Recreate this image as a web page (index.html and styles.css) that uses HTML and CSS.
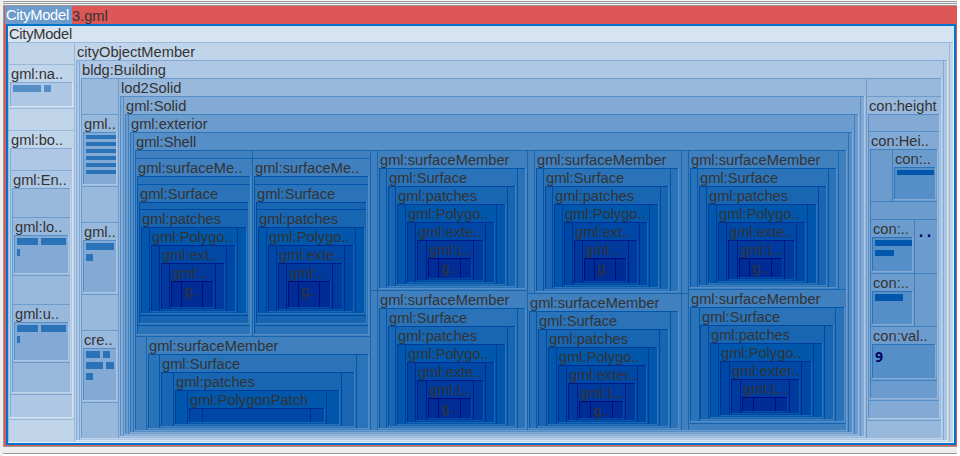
FILE: index.html
```
<!DOCTYPE html>
<html lang="en">
<head>
<meta charset="utf-8">
<title>3.gml</title>
<link rel="stylesheet" href="styles.css">
</head>
<body>
<div class="window">
  <div class="rules"></div>
  <main class="panel">
    <header class="title"><span class="tab">CityModel</span><span class="file">3.gml</span></header>
    <section class="frame" id="map"></section>
  </main>
  <footer class="foot"></footer>
</div>
<script src="treemap.js"></script>
</body>
</html>
```
FILE: styles.css
```
* { box-sizing: border-box; }
body {
  margin: 0;
  width: 960px;
  height: 456px;
  overflow: hidden;
  background: #fff;
  font: 14.67px/18px "Liberation Sans", Arial, sans-serif;
  color: #333;
}
.window { width: 957px; height: 456px; background: #eee; display: flex; flex-direction: column; }
.rules {
  height: 6px;
  margin-left: 3px;
  background: repeating-linear-gradient(#f4f4f4 0 1px, #999 1px 2px);
}
.panel {
  height: 441px;
  margin-left: 3px;
  padding: 0 1px 1px 0;
  background: #de5757;
  border-left: 1px solid #999;
  border-bottom: 1px solid #999;
}
.title { height: 18px; display: flex; padding-left: 1px; }
.tab { width: 67px; padding-left: 1px; background: #6c9cce; color: #fff; white-space: nowrap; letter-spacing: -0.25px; }
.file { padding-top: 1px; }
.frame { height: 421px; margin-left: 2px; border: 2px solid #0074cc; }
.foot { height: 9px; margin-left: 3px; padding-top: 6px; }
.foot::before { content: ""; display: block; height: 3px; border: solid #999; border-width: 1px 0; background: #fff; }

.box { display: grid; min-width: 0; min-height: 0; background: var(--fill); box-shadow: inset -1px -1px var(--light), inset 1px 1px var(--dark); }
.root { box-shadow: none; }
.line { background: var(--dark); }
.label { width: 0; height: 18px; line-height: 20px; white-space: pre; z-index: 1; }
.root > .label { line-height: 16px; letter-spacing: -0.25px; }
.bar { background: var(--ink); }
.value { width: 0; height: 18px; white-space: pre; color: #000064; font: bold 13.3px/18px "DejaVu Sans Mono", monospace; }
.digit { font: bold 14px/18px "Open Sans", sans-serif; }

.l0 { --fill: #d6e3f0; }
.l1 { --fill: #c1d5ea; --dark: #98b8dc; --light: #eaf1f7; --ink: #82aad5; }
.l2 { --fill: #adc7e4; --dark: #82aad5; --light: #d6e3f0; --ink: #568fc8; }
.l3 { --fill: #98b8dc; --dark: #6c9cce; --light: #c1d5ea; --ink: #4080bf; }
.l4 { --fill: #82aad5; --dark: #568fc8; --light: #adc7e4; --ink: #2b73b9; }
.l5 { --fill: #6c9cce; --dark: #4080bf; --light: #98b8dc; --ink: #1866b2; }
.l6 { --fill: #568fc8; --dark: #2b73b9; --light: #82aad5; --ink: #0057ab; }
.l7 { --fill: #4080bf; --dark: #1866b2; --light: #6c9cce; }
.l8 { --fill: #2b73b9; --dark: #0057ab; --light: #568fc8; }
.l9 { --fill: #1866b2; --dark: #0048a6; --light: #4080bf; }
.l10 { --fill: #0057ab; --dark: #003a9d; --light: #2b73b9; }
.l11 { --fill: #0048a6; --dark: #002d95; --light: #1866b2; }
.l12 { --fill: #003a9d; --dark: #001a8c; --light: #0057ab; }
.l13 { --fill: #002d95; --dark: #000a82; --light: #0048a6; }
```
FILE: treemap.js
```
// Node constructors. Coordinates are in map units; boxes nest.
const box = (level, x1, y1, x2, y2, ...kids) => ({ cls: 'box l' + level, x1, y1, x2, y2, kids: kids.flat() });
const v = (x, y1, y2) => ({ cls: 'line', x1: x, x2: x + 1, y1, y2 });
const h = (y, x1, x2) => ({ cls: 'line', y1: y, y2: y + 1, x1, x2 });
const t = (text, x, y) => ({ cls: 'label', text, x1: x, y1: y, x2: x + 1, y2: y + 1 });
const val = (text, x, y, kind = '') => ({ cls: 'value ' + kind, text, x1: x, y1: y, x2: x + 1, y2: y + 1 });
const bar = (x1, x2, y1, y2) => ({ cls: 'bar', x1, x2, y1, y2 });

// A chain of boxes, each holding the next one between two dividers.
// Row: [x1, x2, left divider, right divider, label]
function chain(level, y, bottom, rows) {
  const [row, ...rest] = rows;
  const [x1, x2, a, b, label] = row;
  const kids = [v(a), v(b)];
  if (rest.length) kids.push(chain(level + 1, y + 18, bottom - 2, rest));
  if (label) kids.push(t(label, a + 3, y));
  return box(level, x1, y, x2, bottom, kids);
}

// A chain whose two outer boxes are divided horizontally.
const tall = (x, right, rows) =>
  box(8, x, 176, right, 335, h(184), h(325),
    box(9, x + 2, 202, right - 2, 324, h(209), h(315),
      chain(10, 227, 314, rows),
      t('gml:patches', x + 5, 209)),
    t('gml:Surface', x + 3, 184));

const third = [
  [379, 526, 386, 517, 'gml:Surface'], [388, 516, 395, 507, 'gml:patches'],
  [397, 506, 405, 496, 'gml:Polygo..'], [407, 495, 415, 485, 'gml:exte..'],
  [417, 484, 426, 473, 'gml:L..'], [428, 472, 438, 460, 'g..']];

const shell = box(7, 135, 150, 847, 431,
  h(158, 136, 370), v(252, 151, 336), v(370), v(377), h(336, 136, 370), v(146, 336, 430),
  h(290, 371, 527), v(527), v(534, 151, 293), h(293, 528, 688), v(681), v(688),
  h(289, 689, 846), v(838, 151, 289), h(423, 689, 846),
  tall(137, 251, [
    [141, 247, 149, 237, 'gml:Polygo..'], [151, 236, 159, 226, 'gml:ext..'],
    [161, 225, 169, 215, 'gml:..'], [171, 214, 181, 202, 'g..']]),
  tall(254, 369, [
    [258, 365, 266, 355, 'gml:Polygo..'], [268, 354, 276, 344, 'gml:exte..'],
    [278, 343, 286, 332, 'gml:..'], [288, 331, 298, 319, 'g..']]),
  chain(8, 354, 429, [
    [148, 369, 159, 356, 'gml:Surface'], [161, 355, 173, 341, 'gml:patches'],
    [175, 340, 187, 326, 'gml:PolygonPatch'], [189, 325, 202, 310]]),
  chain(8, 168, 289, third),
  chain(8, 308, 429, third),
  chain(8, 168, 292, [
    [536, 679, 543, 670, 'gml:Surface'], [545, 669, 552, 660, 'gml:patches'],
    [554, 659, 562, 649, 'gml:Polygo..'], [564, 648, 572, 639, 'gml:ext..'],
    [574, 638, 582, 628, 'gml:..'], [584, 627, 594, 615, 'g..']]),
  chain(8, 311, 429, [
    [529, 679, 536, 670, 'gml:Surface'], [538, 669, 546, 659, 'gml:patches'],
    [548, 658, 556, 648, 'gml:Polygo..'], [558, 647, 566, 637, 'gml:exter..'],
    [568, 636, 577, 625, 'gml:L..'], [579, 624, 590, 612, 'g..']]),
  chain(8, 168, 288, [
    [690, 837, 697, 828, 'gml:Surface'], [699, 827, 706, 818, 'gml:patches'],
    [708, 817, 716, 807, 'gml:Polygo..'], [718, 806, 726, 796, 'gml:exte..'],
    [728, 795, 737, 784, 'gml:L..'], [739, 783, 749, 771, 'g..']]),
  chain(8, 307, 422, [
    [690, 845, 699, 835, 'gml:Surface'], [700, 834, 708, 824, 'gml:patches'],
    [710, 823, 718, 813, 'gml:Polygo..'], [720, 812, 729, 801, 'gml:exter..'],
    [731, 800, 740, 789, 'gml:L..'], [742, 788, 753, 775]]),
  t('gml:surfaceMe..', 138, 158), t('gml:surfaceMe..', 255, 158),
  t('gml:surfaceMember', 149, 336),
  t('gml:surfaceMember', 380, 150), t('gml:surfaceMember', 380, 290),
  t('gml:surfaceMember', 537, 150), t('gml:surfaceMember', 530, 293),
  t('gml:surfaceMember', 691, 150), t('gml:surfaceMember', 691, 289));

const solid = box(4, 120, 96, 865, 437, v(123), v(860),
  box(5, 125, 114, 859, 435, v(128), v(854),
    box(6, 130, 132, 853, 433, v(133), v(848), shell, t('gml:Shell', 136, 132)),
    t('gml:exterior', 131, 114)),
  t('gml:Solid', 126, 96));

const height = box(4, 868, 114, 940, 419, h(131), h(400),
  box(5, 870, 149, 938, 399,
    v(892, 150, 201), h(201), h(219), v(914, 219, 326), h(273), h(326), h(380),
    box(6, 894, 167, 936, 200, bar(897, 934, 170, 175)),
    box(6, 872, 237, 913, 272, bar(875, 912, 240, 246), bar(875, 894, 250, 256)),
    box(6, 872, 291, 913, 325, bar(875, 903, 294, 301)),
    box(6, 872, 344, 936, 379, val('9', 875, 348, 'digit')),
    t('con:..', 895, 149), t('con:..', 873, 219), t('con:..', 873, 273),
    t('con:val..', 873, 326), val('..', 917, 224)),
  t('con:Hei..', 871, 131));

const building = box(3, 81, 78, 942, 439,
  v(118), v(866), h(114, 82, 118), h(186, 82, 118), h(222, 82, 118), h(294, 82, 118),
  h(330, 82, 118), h(402, 82, 118), h(96, 867, 941), h(420, 867, 941),
  box(4, 83, 132, 117, 185, [135, 142, 149, 156, 163, 170].map(y => bar(86, 116, y, y + 4))),
  box(4, 83, 240, 117, 293, bar(86, 114, 243, 250), bar(86, 93, 254, 261)),
  box(4, 83, 348, 117, 401, bar(86, 100, 351, 358), bar(103, 110, 351, 358),
    bar(86, 103, 362, 369), bar(106, 114, 362, 369), bar(86, 93, 373, 380)),
  solid, height,
  t('gml..', 84, 114), t('gml..', 84, 222), t('cre..', 84, 330),
  t('lod2Solid', 121, 78), t('con:height', 869, 96));

const corner = y => box(4, 14, y, 69, y + 39,
  bar(17, 38, y + 3, y + 10), bar(41, 66, y + 3, y + 10), bar(17, 20, y + 14, y + 21));

const bounded = box(2, 10, 148, 73, 418, h(170), h(394),
  box(3, 12, 188, 71, 393, h(217), h(275), h(304), h(362),
    corner(235), corner(322), t('gml:lo..', 15, 217), t('gml:u..', 15, 304)),
  t('gml:En..', 13, 170));

const root = box(0, 8, 26, 954, 443,
  box(1, 8, 42, 954, 443,
    v(74), v(949), h(64, 9, 74), h(108, 9, 74), h(130, 9, 74), h(419, 9, 74),
    box(2, 10, 82, 73, 107, bar(13, 41, 85, 92), bar(44, 51, 85, 92)),
    bounded,
    box(2, 76, 60, 948, 441, v(79), v(943), building, t('bldg:Building', 82, 60)),
    t('gml:na..', 11, 64), t('gml:bo..', 11, 130), t('cityObjectMember', 77, 42)),
  t('CityModel', 9, 26));

// Track sizes between consecutive distinct coordinates.
const tracks = s => s.slice(1).map((n, i) => n - s[i] + 'px').join(' ');
const stops = list => [...new Set(list)].sort((a, b) => a - b);

function draw(node) {
  const el = document.createElement('div');
  el.className = node.cls;
  if (node.text) el.textContent = node.text;
  if (node.kids && node.kids.length) {
    for (const k of node.kids) {
      k.x1 ??= node.x1 + 1; k.x2 ??= node.x2 - 1;
      k.y1 ??= node.y1 + 1; k.y2 ??= node.y2 - 1;
    }
    const xs = stops([node.x1, node.x2, ...node.kids.flatMap(k => [k.x1, k.x2])]);
    const ys = stops([node.y1, node.y2, ...node.kids.flatMap(k => [k.y1, k.y2])]);
    el.style.gridTemplateColumns = tracks(xs);
    el.style.gridTemplateRows = tracks(ys);
    for (const k of node.kids) {
      const child = draw(k);
      child.style.gridArea = [ys.indexOf(k.y1) + 1, xs.indexOf(k.x1) + 1, ys.indexOf(k.y2) + 1, xs.indexOf(k.x2) + 1].join(' / ');
      el.append(child);
    }
  }
  return el;
}

const map = draw(root);
map.classList.add('root');
document.getElementById('map').append(map);
```
